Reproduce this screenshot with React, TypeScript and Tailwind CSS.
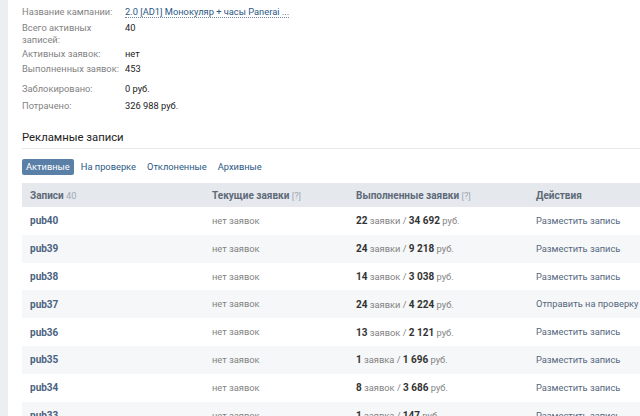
import React from "react";

const rows = [
  { id: "pub40", n: "22", w: "заявки", s: "34 692", a: "Разместить запись" },
  { id: "pub39", n: "24", w: "заявки", s: "9 218", a: "Разместить запись" },
  { id: "pub38", n: "14", w: "заявок", s: "3 038", a: "Разместить запись" },
  { id: "pub37", n: "24", w: "заявки", s: "4 224", a: "Отправить на проверку" },
  { id: "pub36", n: "13", w: "заявок", s: "2 121", a: "Разместить запись" },
  { id: "pub35", n: "1", w: "заявка", s: "1 696", a: "Разместить запись" },
  { id: "pub34", n: "8", w: "заявок", s: "3 686", a: "Разместить запись" },
  { id: "pub33", n: "1", w: "заявка", s: "147", a: "Разместить запись" },
];

function InfoRow({ label, children, className = "" }: { label: React.ReactNode; children: React.ReactNode; className?: string }) {
  return (
    <div className={"flex leading-[12px] " + className}>
      <div className="w-[103px] shrink-0 text-[#828282] whitespace-nowrap">{label}</div>
      <div className="text-[#222] whitespace-nowrap">{children}</div>
    </div>
  );
}

export default function App() {
  return (
    <div
      className="flex w-[640px] h-[416px] overflow-hidden bg-white text-[9.3px]"
      style={{ fontFamily: 'Roboto, "Liberation Sans", Arial, sans-serif' }}
    >
      <div className="w-[8px] shrink-0 bg-[#edeef0]" />
      <div className="flex-1 pl-[14px] min-w-0">
        <div className="pt-[6px] flex flex-col">
          <InfoRow label="Название кампании:">
            <span className="text-[#2a5885] border-b border-dotted border-[#6a86a6]">2.0 [AD1] Монокуляр + часы Panerai ...</span>
          </InfoRow>
          <InfoRow label={<>Всего активных<br />записей:</>} className="mt-[4px]">40</InfoRow>
          <InfoRow label="Активных заявок:" className="mt-[2px]">нет</InfoRow>
          <InfoRow label="Выполненных заявок:" className="mt-[3px]">453</InfoRow>
          <InfoRow label="Заблокировано:" className="mt-[8px]">0 руб.</InfoRow>
          <InfoRow label="Потрачено:" className="mt-[5px]">326 988 руб.</InfoRow>
        </div>
        <div className="mt-[18px] pb-[3px] border-b border-[#e7e8ec] text-[11.3px] text-[#222] leading-[15px]">Рекламные записи</div>
        <div className="mt-[10px] flex items-center">
          <div className="bg-[#5b80a8] text-white rounded-[2px] px-[4px] h-[16px] leading-[16px]">Активные</div>
          <div className="text-[#2a5885] ml-[7px]">На проверке</div>
          <div className="text-[#2a5885] ml-[11px]">Отклоненные</div>
          <div className="text-[#2a5885] ml-[11px]">Архивные</div>
        </div>
        <div className="mt-[8px] w-[700px]">
          <div className="flex h-[24px] items-center bg-[#e5e9ee] text-[#5e6a78]">
            <div className="w-[190px] pl-[8px]"><span className="font-bold text-[10px]">Записи</span> <span className="text-[#a0a8b1]">40</span></div>
            <div className="w-[144px]"><span className="font-bold text-[10px]">Текущие заявки</span> <span className="text-[#a0a8b1]">[?]</span></div>
            <div className="w-[180px]"><span className="font-bold text-[10px]">Выполненные заявки</span> <span className="text-[#a0a8b1]">[?]</span></div>
            <div className="font-bold text-[10px]">Действия</div>
          </div>
          {rows.map((r, i) => (
            <div key={r.id} className={"flex h-[27.8px] items-center " + (i % 2 ? "bg-[#f5f7f8]" : "bg-white")}>
              <div className="w-[190px] pl-[8px] font-bold text-[10px] text-[#4b6280]">{r.id}</div>
              <div className="w-[144px] text-[#828282]">нет заявок</div>
              <div className="w-[180px] text-[#828282]">
                <span className="font-bold text-[10px] text-[#333]">{r.n}</span> {r.w} / <span className="font-bold text-[10px] text-[#333]">{r.s}</span> руб.
              </div>
              <div className="text-[#55677d] whitespace-nowrap">{r.a}</div>
            </div>
          ))}
        </div>
      </div>
    </div>
  );
}
